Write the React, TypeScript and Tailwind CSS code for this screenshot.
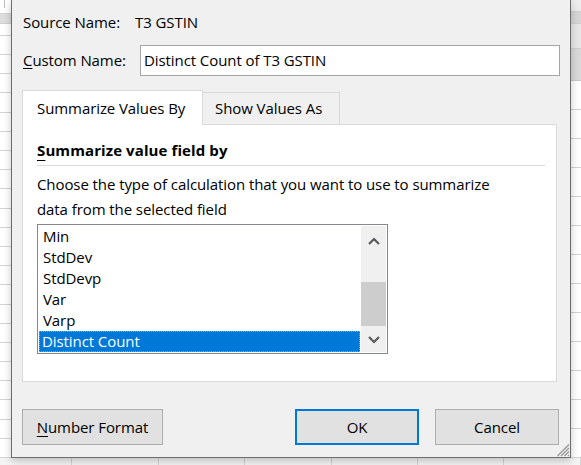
import React from 'react';

const font = "font-['Open_Sans','Noto_Sans',sans-serif]";

const listItems = ['Min', 'StdDev', 'StdDevp', 'Var', 'Varp', 'Distinct Count'];

function Chevron({ up }: { up?: boolean }) {
  return (
    <svg width="12" height="8" viewBox="0 0 12 8" className="block">
      <path
        d={up ? 'M1 7 L6 2 L11 7' : 'M1 1 L6 6 L11 1'}
        fill="none"
        stroke="#5a5a5a"
        strokeWidth="2.2"
      />
    </svg>
  );
}

function SheetLeft() {
  return (
    <div className="flex flex-col bg-white w-[11px] h-[458px] overflow-hidden">
      <div className="h-[22px] border-b border-[#d4d4d4] flex">
        <div className="w-[5px] h-[8px] border-r border-[#bdbdbd]" />
      </div>
      <div className="h-[15px] bg-[#dedede] border-b border-[#d0d0d0]" />
      <div className="h-[18px] border-b border-[#d4d4d4]" />
      {Array.from({ length: 22 }).map((_, i) => (
        <div key={i} className="h-[19.2px] shrink-0 border-b border-[#d4d4d4]" />
      ))}
    </div>
  );
}

function SheetRight() {
  return (
    <div className="flex flex-col bg-white w-[10px] h-[458px] overflow-hidden">
      <div className="h-[17px] bg-[#ececec] border-b border-[#cfcfcf]" />
      <div className="h-[16px] bg-[#d6d6d6] border-b border-[#cfcfcf]" />
      <div className="h-[34px] bg-[#e6e6e6] border-b border-[#d0d0d0]" />
      <div className="h-[45px] bg-[#d9d9d9] border-b border-[#c8c8c8]" />
      {Array.from({ length: 13 }).map((_, i) => (
        <div key={i} className="h-[29px] shrink-0 border-b border-[#d4d4d4]" />
      ))}
    </div>
  );
}

function SheetBottom() {
  const widths = [72, 87, 86, 87, 86, 86, 77];
  return (
    <div className="flex h-[7px] bg-[#f4f4f4]">
      {widths.map((w, i) => (
        <div key={i} style={{ width: w }} className="h-full border-r border-[#d4d4d4] shrink-0" />
      ))}
    </div>
  );
}

export default function App() {
  return (
    <div className={`w-[581px] h-[465px] overflow-hidden bg-white text-black text-[15px] tracking-[-0.08px] ${font}`}>
      <div className="flex">
        <SheetLeft />
        {/* Dialog */}
        <div className="relative z-10 w-[560px] h-[458px] bg-[#f0f0f0] border-l border-r border-b border-[#6d6d6d] pl-[10px] pr-[9px] flex flex-col shadow-[0_3px_8px_rgba(0,0,0,0.22)]">
          <div className="mt-[12px] h-[20px] flex items-center leading-none">
            <span className="pl-[1px] w-[113px]">Source Name:</span>
            <span>T3 GSTIN</span>
          </div>

          <div className="mt-[13px] flex items-center">
            <span className="pl-[1px] w-[118px] leading-none">
              <u className="underline-offset-2">C</u>ustom Name:
            </span>
            <div className="w-[420px] h-[31px] bg-white border border-[#a5a5a5] flex items-center pl-[3px] leading-none">
              Distinct Count of T3 GSTIN
            </div>
          </div>

          {/* Tabs */}
          <div className="mt-[14px] flex items-end h-[34px]">
            <div className="relative z-10 w-[181px] h-[35px] -mb-px bg-white border border-b-0 border-[#d9d9d9] pl-[14px] pt-[7px] leading-[20px]">
              Summarize Values By
            </div>
            <div className="w-[137px] h-[32px] bg-[#f0f0f0] border border-l-0 border-b-0 border-[#d9d9d9] pl-[12px] pt-[5px] leading-[20px]">
              Show Values As
            </div>
          </div>

          <div className="w-[535px] h-[258px] bg-white border border-[#d9d9d9] pl-[14px] pr-[11px] pt-[15px]">
            <div className="h-[20px] leading-[20px] font-bold tracking-[0.1px]">
              <u className="underline-offset-[4px]">S</u>ummarize value field by
            </div>
            <div className="mt-[5px] h-px bg-[#dadada]" />
            <div className="mt-[6px] leading-[25px]">
              Choose the type of calculation that you want to use to summarize
              <br />
              data from the selected field
            </div>

            {/* Listbox */}
            <div className="mt-[2px] w-[351px] h-[130px] border border-[#828790] flex p-px">
              <div className="w-[322px] flex flex-col">
                {listItems.map((item, i) => {
                  const selected = i === listItems.length - 1;
                  return (
                    <div
                      key={item}
                      className={
                        selected
                          ? 'h-[21px] pl-[3px] leading-[21px] bg-[#0078d7] text-white outline-1 outline-dotted outline-[#e79a3c] -outline-offset-1'
                          : 'h-[21px] pl-[4px] leading-[21px]'
                      }
                    >
                      {item}
                    </div>
                  );
                })}
              </div>
              <div className="ml-px w-[25px] bg-[#f0f0f0] flex flex-col">
                <div className="h-[26px] flex items-center justify-center pt-[4px]">
                  <Chevron up />
                </div>
                <div className="h-[30px]" />
                <div className="h-[44px] bg-[#cdcdcd]" />
                <div className="h-[26px] flex items-center justify-center pt-[1px]">
                  <Chevron />
                </div>
              </div>
            </div>
          </div>

          {/* Buttons */}
          <div className="mt-[27px] flex items-center">
            <button className="w-[141px] h-[36px] bg-[#e1e1e1] border border-[#adadad] leading-none text-center">
              <u className="underline-offset-[3px]">N</u>umber Format
            </button>
            <button className="ml-[132px] w-[124px] h-[36px] bg-[#e1e1e1] border-2 border-[#0078d7] leading-none">
              OK
            </button>
            <button className="ml-[16px] w-[124px] h-[36px] bg-[#e1e1e1] border border-[#adadad] leading-none">
              Cancel
            </button>
          </div>

          {/* Resize grip */}
          <svg width="14" height="14" viewBox="0 0 14 14" className="absolute right-0 bottom-0">
            <path
              d="M13 1.5 L1.5 13 M13 5 L5 13 M13 8.5 L8.5 13 M13 12 L12 13"
              stroke="#9a9a9a"
              strokeWidth="1.4"
            />
          </svg>
        </div>
        <SheetRight />
      </div>
      <SheetBottom />
    </div>
  );
}
